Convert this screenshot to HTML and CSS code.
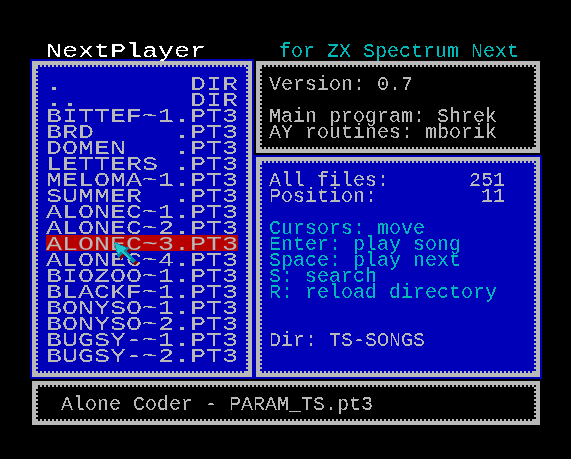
FILE: index.html
```html
<!DOCTYPE html>
<html lang="en">
<head>
  <meta charset="UTF-8">
  <meta name="viewport" content="width=device-width, initial-scale=1.0">
  <title>NextPlayer</title>
  <link rel="stylesheet" href="styles.css">
</head>
<body>
  <svg class="defs" width="0" height="0">
    <filter id="crisp" x="-5%" y="-60%" width="110%" height="220%" color-interpolation-filters="sRGB">
      <feComponentTransfer>
        <feFuncA type="discrete" tableValues="0 0 1 1"/>
      </feComponentTransfer>
    </filter>
  </svg>

  <div class="screen">
    <div class="titles">
      <div class="title-left"><span class="wide">NextPlayer</span></div>
      <div class="title-right">for ZX Spectrum Next</div>
    </div>

    <div class="columns">
      <div class="frame active files-frame">
        <div class="panel blue files">
          <div class="wide file-list">
            <div class="row">.        DIR</div>
            <div class="row">..       DIR</div>
            <div class="row">BITTEF~1.PT3</div>
            <div class="row">BRD     .PT3</div>
            <div class="row">DOMEN   .PT3</div>
            <div class="row">LETTERS .PT3</div>
            <div class="row">MELOMA~1.PT3</div>
            <div class="row">SUMMER  .PT3</div>
            <div class="row">ALONEC~1.PT3</div>
            <div class="row">ALONEC~2.PT3</div>
            <div class="row selected">ALONEC~3.PT3</div>
            <div class="row">ALONEC~4.PT3</div>
            <div class="row">BIOZOO~1.PT3</div>
            <div class="row">BLACKF~1.PT3</div>
            <div class="row">BONYSO~1.PT3</div>
            <div class="row">BONYSO~2.PT3</div>
            <div class="row">BUGSY-~1.PT3</div>
            <div class="row">BUGSY-~2.PT3</div>
          </div>
        </div>
        <svg class="pointer" width="28" height="26" viewBox="0 0 28 26" shape-rendering="crispEdges">
          <path class="pointer-shadow" d="M4 3 L19 9 L16 12 L26 22 L23 24 L13 15 L8 19 Z"/>
          <path class="pointer-dark" d="M2 1 L17 7 L14 10 L24 20 L21 22 L11 13 L6 17 Z"/>
          <path class="pointer-light" d="M3 2 L14 7 L11 10 L19 18 L17 18 L9 11 L6 13 Z"/>
        </svg>
      </div>

      <div class="side">
        <div class="frame">
          <div class="panel black about">
            <div class="text">Version: 0.7</div>
            <div class="text">&nbsp;</div>
            <div class="text">Main program: Shrek</div>
            <div class="text">AY routines: mborik</div>
          </div>
        </div>
        <div class="frame active">
          <div class="panel blue info">
            <div class="text split"><span>All files:</span><span>251</span></div>
            <div class="text split"><span>Position:</span><span>11</span></div>
            <div class="text">&nbsp;</div>
            <div class="text cyan">Cursors: move</div>
            <div class="text cyan">Enter: play song</div>
            <div class="text cyan">Space: play next</div>
            <div class="text cyan">S: search</div>
            <div class="text cyan">R: reload directory</div>
            <div class="text">&nbsp;</div>
            <div class="text">&nbsp;</div>
            <div class="text">Dir: TS-SONGS</div>
          </div>
        </div>
      </div>
    </div>

    <div class="frame">
      <div class="panel black status">
        <div class="text">Alone Coder - PARAM_TS.pt3</div>
      </div>
    </div>
  </div>
</body>
</html>
```

FILE: styles.css
```css
* {
  margin: 0;
  padding: 0;
  box-sizing: border-box;
}

body {
  background: #000;
  color: #b8b8b8;
  font-family: "Liberation Mono", monospace;
  font-size: 20px;
  line-height: 12px;
  overflow: hidden;
}

.defs {
  display: block;
  height: 0;
}

.screen {
  width: 571px;
  height: 459px;
  padding: 43px 29px 0 30px;
}

/* kept above the panels so the tails of y and p are not covered */
.titles {
  position: relative;
  z-index: 1;
  display: flex;
  height: 16px;
}

.title-left {
  width: 232px;
  padding: 3px 0 0 16px;
  color: #fff;
}

.title-right {
  padding: 3px 0 0 17px;
  color: #00b8b8;
  filter: url(#crisp);
}

.wide {
  display: inline-block;
  width: 144px;
  transform: scaleX(1.3333);
  transform-origin: left top;
  filter: url(#crisp);
}

.title-left .wide {
  width: 120px;
}

.columns {
  display: flex;
}

.frame {
  border: 2px solid transparent;
}

.frame.active {
  border-color: #0000b8;
}

.files-frame {
  position: relative;
  width: 224px;
  height: 320px;
}

.side {
  width: 288px;
}

/* grey band with a notched inner edge */
.panel {
  border: 4px solid #b8b8b8;
  background-image:
    repeating-linear-gradient(90deg, #b8b8b8 0 2px, transparent 2px 4px),
    repeating-linear-gradient(90deg, #b8b8b8 0 2px, transparent 2px 4px),
    repeating-linear-gradient(0deg, #b8b8b8 0 2px, transparent 2px 4px),
    repeating-linear-gradient(0deg, #b8b8b8 0 2px, transparent 2px 4px);
  background-size: 100% 2px, 100% 2px, 2px 100%, 2px 100%;
  background-position: left top, left bottom, left top, right top;
  background-repeat: no-repeat;
  background-origin: padding-box;
  background-clip: padding-box;
}

.panel.blue {
  background-color: #0000b8;
}

.panel.black {
  background-color: #000;
}

.files {
  height: 316px;
  padding: 10px 0 0 10px;
}

.row {
  height: 16px;
  padding-top: 4px;
  white-space: pre;
}

.selected {
  background: #b80000;
}

.about {
  height: 92px;
  padding: 10px 9px 0;
}

.info {
  height: 220px;
  padding: 10px 9px 0;
}

.status {
  width: 508px;
  height: 44px;
  padding: 10px 25px 0;
}

.text {
  height: 16px;
  padding-top: 4px;
  white-space: pre;
  filter: url(#crisp);
}

.split {
  display: flex;
  justify-content: space-between;
  width: 236px;
}

.cyan {
  color: #00b8b8;
}

.pointer {
  position: absolute;
  left: 80px;
  top: 180px;
}

.pointer-shadow {
  fill: #800000;
}

.pointer-dark {
  fill: #0088a8;
}

.pointer-light {
  fill: #20c8c8;
}
```
